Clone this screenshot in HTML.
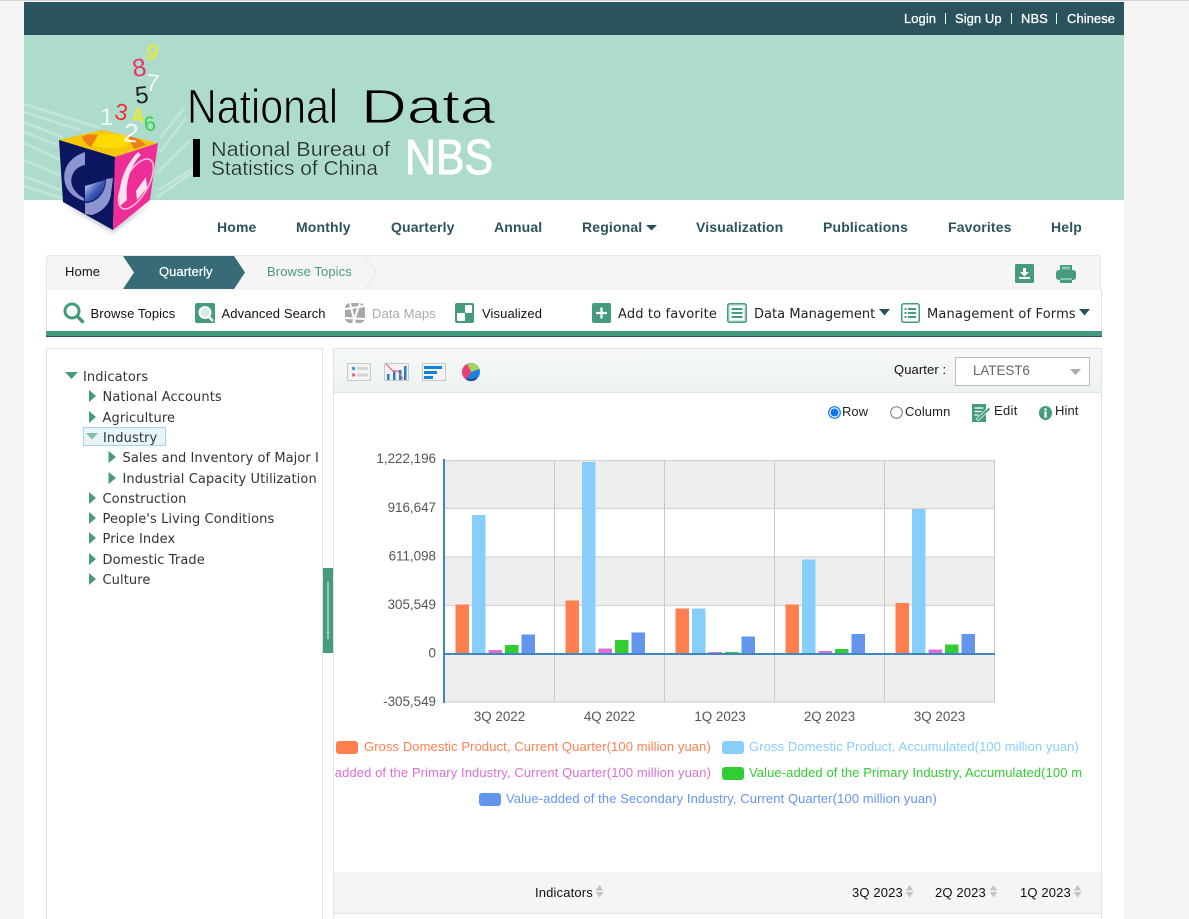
<!DOCTYPE html>
<html lang="en">
<head>
<meta charset="utf-8">
<title>National Data</title>
<style>
html,body{margin:0;padding:0;background:#f5f5f5;width:1189px;height:919px;overflow:hidden}
body{position:relative;font-family:"Liberation Sans",sans-serif}
.a{position:absolute}
.t{position:absolute;white-space:nowrap;line-height:16px;height:16px}
.nav{font-weight:bold;font-size:14px;color:#2b535e;letter-spacing:.15px;top:219px}
.top{color:#fff;font-size:13px;top:11px;letter-spacing:.05px;-webkit-text-stroke:.3px #fff}
.tb{font-size:13px;color:#111;top:306px;letter-spacing:.1px}
.tr{font-family:"DejaVu Sans",sans-serif;font-size:13px;color:#333;letter-spacing:.1px}
.m{font-family:"DejaVu Sans",sans-serif;font-size:13px;color:#222;top:307px;letter-spacing:.03px}
.th{font-size:13px;color:#111;top:885px;letter-spacing:.15px}
.lg{font-size:13px;letter-spacing:.09px}
svg{position:absolute;overflow:visible}
</style>
</head>
<body>
<div class="a" style="left:0;top:0;width:1189px;height:1px;background:#d4d4d4"></div>
<div class="a" style="left:24px;top:2px;width:1100px;height:917px;background:#fff"></div>
<div class="a" style="left:24px;top:2px;width:1100px;height:33px;background:#2b535e"></div>
<div class="a" style="left:24px;top:35px;width:1100px;height:165px;background:#aedccc"></div>

<span class="t top" style="left:904px">Login</span>
<span class="a" style="left:945px;top:13px;width:1px;height:11px;background:#dfe"></span>
<span class="t top" style="left:955px">Sign Up</span>
<span class="a" style="left:1011px;top:13px;width:1px;height:11px;background:#dfe"></span>
<span class="t top" style="left:1021px">NBS</span>
<span class="a" style="left:1056px;top:13px;width:1px;height:11px;background:#dfe"></span>
<span class="t top" style="left:1067px">Chinese</span>

<!-- Logo -->
<svg style="left:0;top:0" width="520" height="240" viewBox="0 0 520 240">
  <defs>
    <filter id="bl" x="-20%" y="-20%" width="140%" height="140%"><feGaussianBlur stdDeviation=".7"/></filter>
    <filter id="sd" x="-40%" y="-40%" width="180%" height="180%"><feGaussianBlur stdDeviation="2"/></filter>
    <linearGradient id="sph" x1="0" y1="0" x2="1" y2="1"><stop offset="0" stop-color="#dfe4f5"/><stop offset=".5" stop-color="#3c5cb8"/><stop offset="1" stop-color="#0c1a70"/></linearGradient>
  </defs>
  <g stroke="#fff" stroke-opacity=".5" fill="none" filter="url(#bl)" stroke-width="1.400">
    <path d="M24 104 L100 128M24 112 L80 130M24 122 L62 137M24 132 L60 146M24 143 L60 160M24 160 L60 175M24 176 L60 190M24 186 L62 198"/>
    <path d="M160 138 L184 108M160 152 L186 118M158 172 L190 140M158 190 L194 168M156 198 L193 172"/>
  </g>
  <polygon points="64,205 113,233 150,204 113,222" fill="#667" opacity=".35" filter="url(#sd)"/>
  <polygon points="59,140 102,130 158,143 115,157" fill="#f6c60c"/>
  <ellipse cx="110" cy="141" rx="21" ry="7" fill="#ffdc00"/>
  <path d="M82 137 Q88 133 98 135 L91 147 Q84 143 82 137Z M128 136 Q140 138 146 145 L134 149Z" fill="#ee7d14"/>
  <polygon points="59,140 115,157 113,230 63,202" fill="#0c1560"/>
  <polygon points="115,157 158,143 150,200 113,230" fill="#ee2d96"/>
  <path d="M85 152 C68 158 62 170 65 183 C67 192 75 198 84 201 L84 198 C76 194 69 186 72 176 C74 170 79 166 85 165Z" fill="#8c95cf"/>
  <path d="M85 203 L85 214 L92 215 C102 212 110 204 111 194 L113 178 L106 179 C106 192 98 203 85 203Z" fill="#8c95cf"/>
  <path d="M85 186 L105 180 C105 193 97 201 85 202Z" fill="url(#sph)"/>
  <ellipse cx="136" cy="184" rx="12" ry="28" transform="rotate(30 136 184)" fill="none" stroke="#f8bcdc" stroke-width="1.600"/>
  <path d="M138 152 C125 165 117 185 120 206 L127 200 C125 185 130 165 141 155Z" fill="#fde0ee"/>
  <path d="M136 191 L146 177 L147 188 L137 200Z" fill="#fce4ef"/>
  <g style="font-family:'Liberation Sans',sans-serif">
    <text x="146" y="60" fill="#f2ec1c" font-size="22" transform="rotate(18 153 52)">9</text>
    <text x="132" y="76" fill="#ea3264" font-size="25" transform="rotate(-8 140 66)">8</text>
    <text x="146" y="91" fill="#f1f5f4" font-size="24" transform="rotate(6 153 82)">7</text>
    <text x="135" y="103" fill="#222" font-size="24" transform="rotate(-6 143 94)">5</text>
    <text x="100" y="125" fill="#f2f6f5" font-size="24">1</text>
    <text x="115" y="120" fill="#ee3030" font-size="23" transform="rotate(10 122 112)">3</text>
    <text x="132" y="122" fill="#f2ec1c" font-size="20" stroke="#f2ec1c" stroke-width=".4" transform="rotate(-10 139 115)">4</text>
    <text x="144" y="131" fill="#2fd73c" font-size="21" transform="rotate(-10 150 124)">6</text>
    <text x="124" y="142" fill="#f5f8f7" font-size="26" transform="rotate(6 133 131)">2</text>
  </g>
  <g style="font-family:'Liberation Sans',sans-serif">
    <text x="187" y="123" font-size="48" fill="#000" stroke="#aedccc" stroke-width=".9" textLength="151" lengthAdjust="spacingAndGlyphs">National</text>
    <text x="361" y="123" font-size="48" fill="#000" stroke="#aedccc" stroke-width=".9" textLength="134" lengthAdjust="spacingAndGlyphs">Data</text>
    <rect x="193" y="139" width="7" height="38" fill="#000"/>
    <text x="211" y="156" font-size="20" fill="#222" stroke="#aedccc" stroke-width=".35" textLength="179" lengthAdjust="spacingAndGlyphs">National Bureau of</text>
    <text x="211" y="175" font-size="20" fill="#222" stroke="#aedccc" stroke-width=".35" textLength="167" lengthAdjust="spacingAndGlyphs">Statistics of China</text>
    <text x="405" y="174" font-size="49" fill="#fff" stroke="#fff" stroke-width="1" textLength="88" lengthAdjust="spacingAndGlyphs">NBS</text>
  </g>
</svg>

<!-- Main nav -->
<span class="t nav" style="left:217px">Home</span>
<span class="t nav" style="left:296px">Monthly</span>
<span class="t nav" style="left:391px">Quarterly</span>
<span class="t nav" style="left:494px">Annual</span>
<span class="t nav" style="left:582px">Regional</span>
<svg style="left:646px;top:225px" width="12" height="6"><path d="M0 0H11L5.500 5.500Z" fill="#2b535e"/></svg>
<span class="t nav" style="left:696px">Visualization</span>
<span class="t nav" style="left:823px">Publications</span>
<span class="t nav" style="left:948px">Favorites</span>
<span class="t nav" style="left:1051px">Help</span>

<!-- Breadcrumb -->
<div class="a" style="left:46px;top:255px;width:1053px;height:34px;background:#f5f5f5;border:1px solid #e4e4e4;border-radius:3px 3px 0 0"></div>
<svg style="left:0;top:0" width="1189" height="340">
  <polygon points="123,256 234,256 245,272.500 234,289 123,289 134,272.500" fill="#366b77"/>
  <path d="M365 256 L376.500 272.500 L365 289" fill="none" stroke="#e6e6e6"/>
</svg>
<span class="t" style="left:65px;top:264px;font-size:13px;color:#111;letter-spacing:.1px">Home</span>
<span class="t" style="left:159px;top:264px;font-size:13px;color:#fff;-webkit-text-stroke:.2px #fff">Quarterly</span>
<span class="t" style="left:267px;top:264px;font-size:13px;color:#4a9b82;letter-spacing:.1px">Browse Topics</span>
<svg style="left:1015px;top:264px" width="19" height="19" viewBox="0 0 19 19"><rect width="19" height="19" rx="1.500" fill="#459a7f"/><path d="M8 4h3v4h3l-4.500 4.500L5 8h3z" fill="#fff"/><rect x="4" y="13" width="11" height="2" fill="#fff"/></svg>
<svg style="left:1056px;top:264px" width="20" height="19" viewBox="0 0 20 19"><path d="M4 1h12v6H4z" fill="#459a7f"/><rect x="0" y="6" width="20" height="10" rx="3" fill="#459a7f"/><rect x="4" y="14" width="12" height="5" fill="#459a7f"/><rect x="4" y="14.500" width="12" height="1" fill="#d8efe7"/><rect x="6" y="2.500" width="8" height="3" fill="#8cc7b3"/></svg>

<!-- Toolbar row -->
<div class="a" style="left:46px;top:290px;width:1054px;height:41px;background:#fff;border-right:1px solid #e4e4e4;border-left:1px solid #e4e4e4"></div>
<div class="a" style="left:46px;top:331px;width:1056px;height:5px;background:#459a7f;border-bottom:1px solid #2b535e"></div>

<svg style="left:63px;top:302px" width="21" height="21" viewBox="0 0 21 21"><circle cx="9" cy="9" r="7" fill="none" stroke="#459a7f" stroke-width="3"/><path d="M14 14l5.500 5.500" stroke="#459a7f" stroke-width="3.500" stroke-linecap="round"/></svg>
<span class="t tb" style="left:90.500px">Browse Topics</span>
<svg style="left:195px;top:303px" width="20" height="20" viewBox="0 0 20 20"><rect width="20" height="20" rx="2" fill="#459a7f"/><circle cx="10" cy="9.500" r="5.500" fill="#d5ece5" stroke="#fff" stroke-width="2"/><path d="M13.500 13.500l4.500 4.500" stroke="#fff" stroke-width="2.500"/></svg>
<span class="t tb" style="left:221.500px">Advanced Search</span>
<svg style="left:345px;top:303px" width="20" height="20" viewBox="0 0 20 20"><rect width="20" height="20" rx="5" fill="#a8a8a8"/><path d="M5 0L10 20M15 0L8 20M0 6L20 3M0 15L20 16" stroke="#fff" stroke-width="2"/></svg>
<span class="t tb" style="left:372px;color:#aaa">Data Maps</span>
<svg style="left:455px;top:303px" width="19" height="20" viewBox="0 0 19 20"><rect width="19" height="20" rx="2" fill="#459a7f"/><rect x="10" y="2" width="7" height="8" rx="1" fill="#fff"/><rect x="2" y="10" width="8" height="8" rx="1" fill="#fff"/></svg>
<span class="t tb" style="left:482px">Visualized</span>

<svg style="left:592px;top:303px" width="19" height="20" viewBox="0 0 19 20"><rect width="19" height="20" rx="2" fill="#459a7f"/><path d="M9.500 4.500v11M4 10h11" stroke="#fff" stroke-width="2.200"/></svg>
<span class="t m" style="left:618px;letter-spacing:.15px">Add to favorite</span>
<svg style="left:727px;top:303px" width="20" height="20" viewBox="0 0 20 20"><rect x=".75" y=".75" width="18.500" height="18.500" rx="2" fill="#cfe8df" stroke="#459a7f" stroke-width="1.500"/><rect x="3" y="3" width="14" height="14" fill="#fff"/><path d="M4.500 6h11M4.500 10h11M4.500 14h11" stroke="#459a7f" stroke-width="2"/></svg>
<span class="t m" style="left:754px">Data Management</span>
<svg style="left:879px;top:309px" width="11" height="7"><path d="M0 0H11L5.500 6.500Z" fill="#2b535e"/></svg>
<svg style="left:901px;top:303px" width="19" height="20" viewBox="0 0 19 20"><rect x=".75" y=".75" width="17.500" height="18.500" rx="2" fill="#fff" stroke="#459a7f" stroke-width="1.500"/><path d="M7 6h8M7 10h8M7 14h8" stroke="#459a7f" stroke-width="2"/><path d="M3.500 6h2M3.500 10h2M3.500 14h2" stroke="#459a7f" stroke-width="2"/></svg>
<span class="t m" style="left:927px;letter-spacing:.15px">Management of Forms</span>
<svg style="left:1079px;top:309px" width="11" height="7"><path d="M0 0H11L5.500 6.500Z" fill="#2b535e"/></svg>

<!-- Tree panel -->
<div class="a" style="left:46px;top:348px;width:275px;height:580px;background:#fff;border:1px solid #e2e2e2"></div>
<div class="a" style="left:83px;top:427px;width:81px;height:17px;background:#e8f4fb;border:1px solid #a9d3ec"></div>
<svg style="left:0;top:340px" width="130" height="260">
  <g fill="#459a7f">
    <path d="M65 32H78L71.500 39Z"/>
    <path d="M89 50V62L96 56Z"/><path d="M89 71V83L96 77Z"/>
    <path d="M86 93H98L92 99.500Z" fill="#82bda9"/>
    <path d="M108.500 111V123L116 117Z"/><path d="M108.500 132V144L116 138Z"/>
    <path d="M89 152V164L96 158Z"/><path d="M89 172V184L96 178Z"/><path d="M89 192V204L96 198Z"/><path d="M89 213V225L96 219Z"/><path d="M89 233V245L96 239Z"/>
  </g>
</svg>
<span class="t tr" style="left:83px;top:370px">Indicators</span>
<span class="t tr" style="left:102.500px;top:390px">National Accounts</span>
<span class="t tr" style="left:102.500px;top:411px">Agriculture</span>
<span class="t tr" style="left:103px;top:431px">Industry</span>
<div class="a" style="left:122.500px;top:451px;width:197px;height:16px;overflow:hidden"><span class="t tr" style="left:0;top:0;letter-spacing:.07px">Sales and Inventory of Major Industrial Products</span></div>
<span class="t tr" style="left:122.500px;top:472px">Industrial Capacity Utilization</span>
<span class="t tr" style="left:102.500px;top:492px">Construction</span>
<span class="t tr" style="left:102.500px;top:512px">People's Living Conditions</span>
<span class="t tr" style="left:102.500px;top:532px">Price Index</span>
<span class="t tr" style="left:102.500px;top:553px">Domestic Trade</span>
<span class="t tr" style="left:102.500px;top:573px">Culture</span>

<!-- Splitter -->
<div class="a" style="left:323px;top:568px;width:10px;height:85px;background:#459a7f"></div>
<div class="a" style="left:327px;top:582px;width:2px;height:57px;background:repeating-linear-gradient(#bfe0d5 0 1px,#6fb29c 1px 2px)"></div>

<!-- Right panel -->
<div class="a" style="left:333px;top:348px;width:767px;height:580px;background:#fff;border:1px solid #e2e2e2"></div>
<div class="a" style="left:334px;top:349px;width:767px;height:43px;background:linear-gradient(#f6f9f8,#edf2f1);border-bottom:1px solid #e2e2e2"></div>

<svg style="left:347px;top:363px" width="24" height="18" viewBox="0 0 24 18"><rect x=".5" y=".5" width="23" height="17" fill="#f3f3f3" stroke="#c9c9c9"/><circle cx="6.500" cy="5.500" r="1.700" fill="#3b9be8"/><circle cx="6.500" cy="12" r="1.700" fill="#ee5f9d"/><rect x="10" y="4" width="11" height="3" fill="#d4d4d4"/><rect x="10" y="10.500" width="11" height="3" fill="#d4d4d4"/></svg>
<svg style="left:384px;top:363px" width="25" height="18" viewBox="0 0 25 18"><rect x=".5" y=".5" width="24" height="17" fill="#f3f3f3" stroke="#c9c9c9"/><rect x="3" y="11" width="2.500" height="6" fill="#2a7ec1"/><rect x="9" y="8" width="2.500" height="9" fill="#2a7ec1"/><rect x="15" y="7" width="2.500" height="10" fill="#2a7ec1"/><rect x="20" y="3" width="2.500" height="14" fill="#2a7ec1"/><path d="M2 1L9 8L14 8L19 16" fill="none" stroke="#ee5f8d" stroke-width="1.200"/></svg>
<svg style="left:422px;top:363px" width="24" height="18" viewBox="0 0 24 18"><rect x=".5" y=".5" width="23" height="17" fill="#f3f3f3" stroke="#c9c9c9"/><rect x="2" y="3" width="18" height="3" fill="#1382de"/><rect x="2" y="8" width="13" height="3" fill="#1382de"/><rect x="2" y="13" width="9" height="3" fill="#1382de"/></svg>
<svg style="left:462px;top:363px" width="18" height="18" viewBox="0 0 18 18"><circle cx="9" cy="9" r="9" fill="#1f7fe0"/><path d="M9 9L5 1A9 9 0 0 1 17.500 6Z" fill="#a5d35a"/><path d="M9 9L5 1A9 9 0 0 0 4 16.500Z" fill="#ee3d74"/><path d="M4 16.500A9 9 0 0 0 15 16L14 14.500A8 8 0 0 1 5 15Z" fill="#1f4f90"/></svg>

<span class="t" style="left:894px;top:362px;font-size:13px;color:#111;letter-spacing:.1px">Quarter :</span>
<div class="a" style="left:955px;top:357px;width:133px;height:27px;background:#fff;border:1px solid #bdbdbd"></div>
<span class="t" style="left:973px;top:363px;font-size:13.500px;color:#666;letter-spacing:-.1px">LATEST6</span>
<svg style="left:1070px;top:369px" width="11" height="6"><path d="M0 0H11L5.500 6Z" fill="#aaa"/></svg>

<svg style="left:828px;top:406px" width="13" height="13" viewBox="0 0 13 13"><circle cx="6.500" cy="6.500" r="5.800" fill="#fff" stroke="#0f75f0" stroke-width="1.200"/><circle cx="6.500" cy="6.500" r="4" fill="#0f75f0"/></svg>
<span class="t" style="left:842px;top:404px;font-size:13px;color:#222">Row</span>
<svg style="left:890px;top:406px" width="13" height="13" viewBox="0 0 13 13"><circle cx="6.500" cy="6.500" r="5.800" fill="#fff" stroke="#767676" stroke-width="1"/></svg>
<span class="t" style="left:905px;top:404px;font-size:13px;color:#222;letter-spacing:.1px">Column</span>
<svg style="left:972px;top:404px" width="19" height="18" viewBox="0 0 19 18"><rect width="14" height="18" fill="#459a7f"/><path d="M2.500 4h9M2.500 7.500h7M2.500 11h4" stroke="#fff" stroke-width="1.300"/><path d="M5 16L17.500 4.500" stroke="#fff" stroke-width="3.500"/><path d="M5.500 15.500L17.500 4.500" stroke="#459a7f" stroke-width="2"/></svg>
<span class="t" style="left:994px;top:403px;font-size:13px;color:#222;letter-spacing:.3px">Edit</span>
<svg style="left:1039px;top:406px" width="13" height="14" viewBox="0 0 13 14"><ellipse cx="6.500" cy="7" rx="6.500" ry="7" fill="#459a7f"/><rect x="5.300" y="2.500" width="2.400" height="2" fill="#fff"/><rect x="5.300" y="5.500" width="2.400" height="6" fill="#fff"/></svg>
<span class="t" style="left:1055px;top:403px;font-size:13px;color:#222;letter-spacing:.1px">Hint</span>

<!-- Chart -->
<svg style="left:0;top:0" width="1189" height="919">
  <rect x="444" y="460" width="551" height="48.500" fill="#eee"/>
  <rect x="444" y="557" width="551" height="48.500" fill="#eee"/>
  <rect x="444" y="654" width="551" height="48" fill="#eee"/>
  <g stroke="#d4d4d4" stroke-width="1">
    <path d="M444 460.500H995M444 508.500H995M444 557H995M444 605.500H995M444 702H995" stroke-width="1.300"/>
  </g>
  <g stroke="#c9c9c9" stroke-width="1">
    <path d="M554.500 460V702M664.500 460V702M774.500 460V702M884.500 460V702M994.500 460V702"/>
  </g>
  <g>
    <rect x="455.500" y="604.500" width="13.500" height="49" fill="#ff7f50"/><rect x="472" y="515" width="13.500" height="138.500" fill="#87cefa"/><rect x="488.500" y="650" width="13.500" height="3.500" fill="#da70d6"/><rect x="505" y="645" width="13.500" height="8.500" fill="#32cd32"/><rect x="521.500" y="634.500" width="13.500" height="19" fill="#6495ed"/>
    <rect x="565.500" y="600.500" width="13.500" height="53" fill="#ff7f50"/><rect x="582" y="462" width="13.500" height="191.500" fill="#87cefa"/><rect x="598.500" y="648.500" width="13.500" height="5" fill="#da70d6"/><rect x="615" y="640" width="13.500" height="13.500" fill="#32cd32"/><rect x="631.500" y="632.500" width="13.500" height="21" fill="#6495ed"/>
    <rect x="675.500" y="608.500" width="13.500" height="45" fill="#ff7f50"/><rect x="692" y="608.500" width="13.500" height="45" fill="#87cefa"/><rect x="708.500" y="652" width="13.500" height="1.500" fill="#da70d6"/><rect x="725" y="652" width="13.500" height="1.500" fill="#32cd32"/><rect x="741.500" y="636.500" width="13.500" height="17" fill="#6495ed"/>
    <rect x="785.500" y="604.500" width="13.500" height="49" fill="#ff7f50"/><rect x="802" y="559.500" width="13.500" height="94" fill="#87cefa"/><rect x="818.500" y="651" width="13.500" height="2.500" fill="#da70d6"/><rect x="835" y="649" width="13.500" height="4.500" fill="#32cd32"/><rect x="851.500" y="634" width="13.500" height="19.500" fill="#6495ed"/>
    <rect x="895.500" y="603" width="13.500" height="50.500" fill="#ff7f50"/><rect x="912" y="509" width="13.500" height="144.500" fill="#87cefa"/><rect x="928.500" y="649.500" width="13.500" height="4" fill="#da70d6"/><rect x="945" y="644.500" width="13.500" height="9" fill="#32cd32"/><rect x="961.500" y="634" width="13.500" height="19.500" fill="#6495ed"/>
  </g>
  <path d="M443 654H995" stroke="#3f86bb" stroke-width="2"/>
  <path d="M444 459V703" stroke="#3f86bb" stroke-width="2"/>
  <g fill="#555" font-size="13.400" style="font-family:'Liberation Sans',sans-serif" text-anchor="end">
    <text x="436" y="463">1,222,196</text>
    <text x="436" y="512">916,647</text>
    <text x="436" y="560.500">611,098</text>
    <text x="436" y="609">305,549</text>
    <text x="436" y="657.500">0</text>
    <text x="436" y="706">-305,549</text>
  </g>
  <g fill="#555" font-size="13.400" style="font-family:'Liberation Sans',sans-serif" text-anchor="middle">
    <text x="499.500" y="721">3Q 2022</text>
    <text x="609.500" y="721">4Q 2022</text>
    <text x="720" y="721">1Q 2023</text>
    <text x="829.500" y="721">2Q 2023</text>
    <text x="939.500" y="721">3Q 2023</text>
  </g>
  <rect x="336" y="741" width="22" height="13" rx="3" fill="#ff7f50"/>
  <rect x="722" y="741" width="22" height="13" rx="3" fill="#87cefa"/>
  <rect x="722" y="767" width="22" height="13" rx="3" fill="#32cd32"/>
  <rect x="479" y="793" width="22" height="13" rx="3" fill="#6495ed"/>
</svg>
<span class="t lg" style="left:364px;top:739px;color:#ff7f50">Gross Domestic Product, Current Quarter(100 million yuan)</span>
<span class="t lg" style="left:749px;top:739px;color:#87cefa">Gross Domestic Product, Accumulated(100 million yuan)</span>
<div class="a" style="left:335px;top:765px;width:376px;height:16px;overflow:hidden"><span class="t lg" style="right:0;top:0;color:#da70d6">Value-added of the Primary Industry, Current Quarter(100 million yuan)</span></div>
<div class="a" style="left:749px;top:765px;width:333px;height:16px;overflow:hidden"><span class="t lg" style="left:0;top:0;color:#32cd32">Value-added of the Primary Industry, Accumulated(100 million yuan)</span></div>
<span class="t lg" style="left:506px;top:791px;color:#6495ed">Value-added of the Secondary Industry, Current Quarter(100 million yuan)</span>

<!-- Table head -->
<div class="a" style="left:334px;top:872px;width:767px;height:41px;background:#f5f5f5;border-bottom:1px solid #e2e2e2"></div>
<span class="t th" style="left:535px">Indicators</span>
<span class="t th" style="left:852px">3Q 2023</span>
<span class="t th" style="left:935px">2Q 2023</span>
<span class="t th" style="left:1020px">1Q 2023</span>
<svg style="left:0;top:880px" width="1189" height="20">
  <g fill="#c4c4c4">
    <path d="M595.500 10.500L599.500 5L603.500 10.500ZM595.500 12L599.500 17.500L603.500 12Z"/>
    <path d="M905.500 10.500L909.500 5L913.500 10.500ZM905.500 12L909.500 17.500L913.500 12Z"/>
    <path d="M989.500 10.500L993.500 5L997.500 10.500ZM989.500 12L993.500 17.500L997.500 12Z"/>
    <path d="M1073.500 10.500L1077.500 5L1081.500 10.500ZM1073.500 12L1077.500 17.500L1081.500 12Z"/>
  </g>
</svg>
</body>
</html>
